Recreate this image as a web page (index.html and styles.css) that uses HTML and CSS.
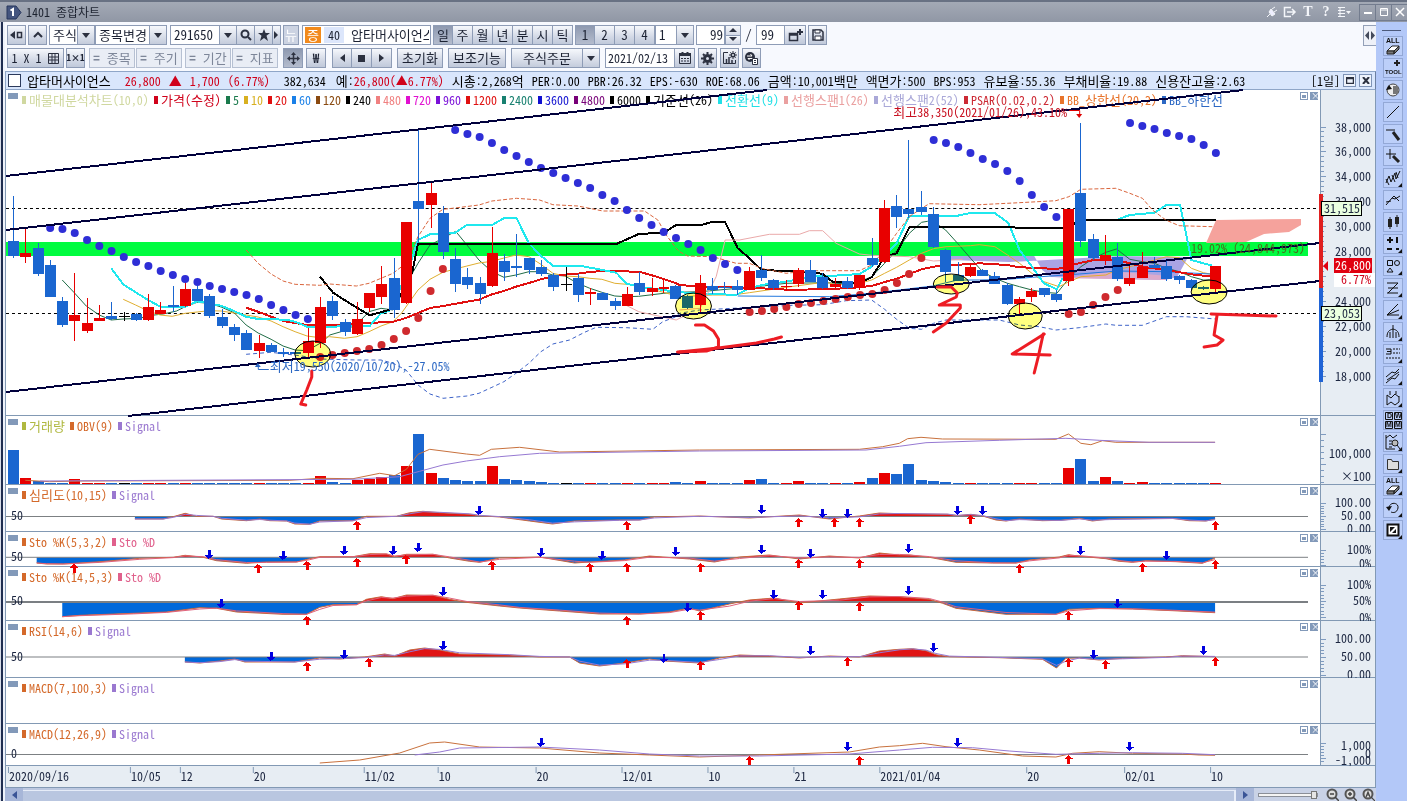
FILE: index.html
```html
<!DOCTYPE html>
<html lang="ko">
<head>
<meta charset="utf-8">
<title>1401 종합차트</title>
<link rel="stylesheet" href="styles.css">
</head>
<body>
<header class="titlebar">
  <svg class="badge" width="16" height="15" viewBox="0 0 16 15"><path d="M1 1h9l5 6.500-5 6.500H1z" fill="#44557f" stroke="#27365c"/><path d="M4.500 5.500L7 4v7" fill="none" stroke="#fff" stroke-width="2"/></svg>
  <h1>1401 종합차트</h1>
  <div class="title-tools">
    <button aria-label="연결"><svg width="12" height="12" viewBox="0 0 12 12"><path d="M1 11l3-3M3 6l3 4 3-2-4-5zM6 3l3-2M8 6l3-2" fill="#eef" stroke="#f4f6fa"/></svg></button>
    <button aria-label="내보내기"><svg width="14" height="12" viewBox="0 0 14 12"><path d="M8 1.500H1.500v9H8M4 6h8M9 3l3 3-3 3" fill="none" stroke="#f4f6fa" stroke-width="1.500"/></svg></button>
    <button class="serif" aria-label="글꼴">T</button>
    <button class="serif" aria-label="도움말">?</button>
    <button aria-label="메뉴"><svg width="14" height="12" viewBox="0 0 14 12"><path d="M1 1.500h7M1 4.500h7M1 7.500h7M1 10.500h7M3 1v10" stroke="#f4f6fa"/><path d="M9 5h5l-2.500 3z" fill="#f4f6fa"/></svg></button>
  </div>
  <div class="window-buttons">
    <button aria-label="최소화"><svg width="10" height="10"><path d="M1 6h8" stroke="#fff" stroke-width="2"/></svg></button>
    <button aria-label="최대화"><svg width="10" height="10"><path d="M1.500 1.500h7v7h-7zM1 3h8" fill="none" stroke="#fff"/></svg></button>
    <button aria-label="닫기"><svg width="10" height="10"><path d="M1 1l8 8M9 1L1 9" stroke="#fff" stroke-width="1.500"/></svg></button>
  </div>
</header>
<div class="workspace">
  <div class="frame"></div>
  <main class="content">
    <div class="toolbars">
      <button class="collapse" aria-label="접기"><svg width="12" height="9"><path d="M5 0v9L1 4.500zM7 0v9l4-4.500z" fill="#444b5c"/></svg></button>
      <div class="toolbar">
        <button class="btn sq" aria-label="이전"><svg width="13" height="10"><path d="M5 1v8L0 5z" fill="#2c3140"/><path d="M7.500 2.500h4v5h-4z" fill="none" stroke="#2c3140" stroke-width="1.500"/></svg></button>
        <button class="btn sq" aria-label="위로"><svg width="10" height="8"><path d="M1 6l4-4 4 4" fill="none" stroke="#2c3140" stroke-width="2"/></svg></button>
        <span class="pair">
          <span class="drop w46"><select aria-label="상품"><option>주식</option></select><i></i></span>
          <span class="drop w72"><select aria-label="종목변경"><option>종목변경</option></select><i></i></span>
        </span>
        <span class="joined">
          <span class="drop w67"><select aria-label="종목코드"><option>291650</option></select><i></i></span>
          <button class="btn w18" aria-label="검색"><svg width="12" height="12"><circle cx="5" cy="5" r="3.500" fill="none" stroke="#2c3140" stroke-width="2"/><path d="M8 8l3 3" stroke="#2c3140" stroke-width="2"/></svg></button>
          <button class="btn w18" aria-label="관심"><svg width="12" height="12"><path d="M6 0l1.600 4H12L8.500 6.800 10 12 6 9l-4 3 1.500-5.200L0 4h4.400z" fill="#2c3140"/></svg></button>
          <button class="btn w8" aria-label="더보기"><svg width="5" height="8"><path d="M0 0l4 4-4 4z" fill="#2c3140"/></svg></button>
        </span>
        <button class="btn news">뉴</button>
        <span class="stock"><b>증</b><em>40</em><span>압타머사이언스</span></span>
        <span class="joined">
          <button class="btn on">일</button><button class="btn">주</button><button class="btn">월</button><button class="btn">년</button><button class="btn">분</button><button class="btn">시</button><button class="btn">틱</button>
        </span>
        <span class="joined">
          <button class="btn on">1</button><button class="btn">2</button><button class="btn">3</button><button class="btn">4</button><span class="drop w39"><select aria-label="주기"><option>1</option></select><i></i></span>
        </span>
        <span class="joined">
          <input class="num right" aria-label="조회 개수" value="99">
          <span class="spin"><button aria-label="증가"><svg width="8" height="5"><path d="M0 4l4-4 4 4z" fill="#2c3140"/></svg></button><button aria-label="감소"><svg width="8" height="5"><path d="M0 0l4 4 4-4z" fill="#2c3140"/></svg></button></span>
        </span>
        <span class="slash">/</span>
        <span class="joined">
          <input class="num" aria-label="전체 개수" value="99">
          <button class="btn w21" aria-label="창 추가"><svg width="15" height="14"><path d="M1.500 5.500h8v7h-8zM1 7h9" fill="none" stroke="#2c3140" stroke-width="1.500"/><path d="M12 1v6M9 4h6" stroke="#2c3140" stroke-width="2"/></svg></button>
        </span>
        <button class="btn sq" aria-label="저장"><svg width="12" height="12"><path d="M1 1h8l2 2v8H1z" fill="none" stroke="#2c3140" stroke-width="1.500"/><path d="M3 1h5v3H3zM3 7h6v4H3z" fill="#fff" stroke="#2c3140"/></svg></button>
      </div>
      <div class="toolbar second">
        <button class="btn grid-btn">1 X 1 <svg width="12" height="11"><path d="M.5.5h10v10H.500zM.5 4h10M.5 7h10M4 .5v10M7 .5v10" fill="none" stroke="#2c3140"/></svg></button>
        <button class="btn sq tiny">1×1</button>
        <span class="sync"><button class="btn off"><b>=</b> 종목</button><button class="btn off"><b>=</b> 주기</button></span>
        <span class="sync"><button class="btn off"><b>=</b> 기간</button><button class="btn off"><b>=</b> 지표</button></span>
        <button class="btn on cross" aria-label="이동"><svg width="13" height="13"><path d="M6.500 2v9M2 6.500h9" stroke="#2c3140" stroke-width="1.500"/><path d="M4 3l2.500-3L9 3zM4 10l2.500 3L9 10zM3 4L0 6.500 3 9zM10 4l3 2.500L10 9z" fill="#2c3140"/></svg></button>
        <button class="btn bold">₩</button>
        <span class="joined player">
          <button class="btn" aria-label="뒤로"><svg width="5" height="8"><path d="M5 0L0 4l5 4z" fill="#2c3140"/></svg></button><button class="btn" aria-label="정지"><svg width="7" height="7"><path d="M0 0h7v7H0z" fill="#2c3140"/></svg></button><button class="btn" aria-label="앞으로"><svg width="5" height="8"><path d="M0 0l5 4-5 4z" fill="#2c3140"/></svg></button>
        </span>
        <button class="btn w46 reset">초기화</button>
        <button class="btn w58">보조기능</button>
        <span class="drop order"><select aria-label="주문"><option>주식주문</option></select><i></i></span>
        <span class="joined"><input class="date" aria-label="날짜" value="2021/02/13"><button class="btn" aria-label="달력"><svg width="12" height="12"><path d="M.5 1.500h11v10H.500z" fill="none" stroke="#2c3140"/><path d="M0 1h12v3H0zM2 6h2v1H2zM5 6h2v1H5zM8 6h2v1H8zM2 8.500h2v1H2zM5 8.500h2v1H5zM8 8.500h2v1H8zM2.500 0h2v2h-2zM7.500 0h2v2h-2z" fill="#2c3140"/></svg></button></span>
        <button class="btn sq" aria-label="설정"><svg width="13" height="13"><circle cx="6.500" cy="6.500" r="3" fill="none" stroke="#2c3140" stroke-width="3"/><path d="M6.500 0v2M6.500 11v2M0 6.500h2M11 6.500h2M2 2l1.500 1.500M9.500 9.500L11 11M11 2L9.500 3.500M3.500 9.500L2 11" stroke="#2c3140" stroke-width="2"/></svg></button>
        <button class="btn sq" aria-label="차트 설정"><svg width="15" height="14"><path d="M6 1.500H1.500v11h12V9" fill="none" stroke="#2c3140"/><path d="M4.500 12V8M7 12V6M10 12V9" stroke="#2c3140" stroke-width="1.500"/><circle cx="11" cy="4" r="1.800" fill="none" stroke="#2c3140" stroke-width="1.600"/><path d="M11 0v1.500M11 6.500V8M7 4h1.500M13.500 4H15M8.300 1.300l1 1M13.700 1.300l-1 1M8.300 6.700l1-1M13.700 6.700l-1-1" stroke="#2c3140"/></svg></button>
        <button class="btn sq" aria-label="변환"><svg width="15" height="14"><circle cx="6" cy="6" r="5" fill="#2c3140"/><path d="M3 5h5L6.500 3M9 7.500H4L5.500 9" fill="none" stroke="#fff"/><path d="M8.500 7.500h5v6h-5zM10 9.500h2M10 11.500h2" fill="#fff" stroke="#2c3140"/></svg></button>
      </div>
    </div>
    <div class="quote">
      <input type="checkbox" aria-label="종목 선택">
      <span class="ko">압타머사이언스</span>
      <span class="up price">26,800</span><span class="up ko">▲</span><span class="up">1,700</span><span class="up">(6.77%)</span>
      <span class="vol">382,634</span>
      <span><span class="ko">예</span>:<span class="up">26,800(▲6.77%)</span></span>
      <span><span class="ko">시총</span>:2,268<span class="ko">억</span></span><span>PER:0.00</span><span>PBR:26.32</span><span>EPS:-630</span><span>ROE:68.06</span><span><span class="ko">금액</span>:10,001<span class="ko">백만</span></span><span><span class="ko">액면가</span>:500</span><span>BPS:953</span><span><span class="ko">유보율</span>:55.36</span><span><span class="ko">부채비율</span>:19.88</span><span><span class="ko">신용잔고율</span>:2.63</span>
      <span class="quote-end">[1일]<button aria-label="창 크기"><svg width="8" height="7"><path d="M.5.5h7v6h-7zM0 1.500h8" fill="none" stroke="#2c3140" stroke-width="1.500"/></svg></button><button aria-label="차트 닫기"><svg width="8" height="7"><path d="M1 0l6 7M7 0L1 7" stroke="#2c3140" stroke-width="2"/></svg></button></span>
    </div>
    <div class="chart" id="chart"></div>
    <footer class="scroller">
      <button class="arrow" aria-label="왼쪽"><svg width="5" height="8"><path d="M5 0L0 4l5 4z" fill="#3b5596"/></svg></button>
      <div class="track"></div>
      <button class="arrow" aria-label="오른쪽"><svg width="5" height="8"><path d="M0 0l5 4-5 4z" fill="#3b5596"/></svg></button>
      <div class="zoombar">
        <input type="range" aria-label="확대" value="100">
        <button aria-label="축소"><svg width="13" height="13"><circle cx="6" cy="6" r="4.500" fill="#ddd" stroke="#555" stroke-width="2"/><path d="M4 6h4M9 9l4 4" stroke="#444" stroke-width="1.500"/></svg></button>
        <button aria-label="확대하기"><svg width="13" height="13"><circle cx="6" cy="6" r="4.500" fill="#ddd" stroke="#555" stroke-width="2"/><path d="M4 6h4M6 4v4M9 9l4 4" stroke="#444" stroke-width="1.500"/></svg></button>
        <button aria-label="전체"><svg width="13" height="13"><circle cx="6" cy="6" r="4.500" fill="#ddd" stroke="#555" stroke-width="2"/><path d="M4 9l2-5 2 5M5 7h2M9 9l4 4" fill="none" stroke="#444" stroke-width="1.200"/></svg></button>
      </div>
    </footer>
  </main>
  <aside class="tools" id="tools"></aside>
</div>
<script src="chart.js"></script>
</body>
</html>
```

FILE: styles.css
```css
* { box-sizing: border-box; }
body {
  margin: 0;
  height: 100vh;
  display: flex;
  flex-direction: column;
  overflow: hidden;
  font: 12px/14px "Noto Sans Mono CJK KR", "Noto Sans CJK KR", sans-serif;
  color: #1c2233;
  background: #f7f9fe;
}
button, input, select { font: inherit; color: inherit; margin: 0; padding: 0; border: 0; background: none; border-radius: 0; }
svg { display: block; flex: none; }
.ko { font-size: 13px; }

.titlebar {
  flex: none;
  height: 22px;
  display: flex;
  align-items: center;
  padding-left: 6px;
  border-top: 2px solid #687183;
  background: linear-gradient(#a3a9b5, #9097a5);
}
.titlebar h1 { margin: 0 auto 0 4px; font-size: 12px; font-weight: 400; color: #1d2330; }
.title-tools { display: flex; gap: 4px; margin-right: 8px; }
.title-tools button { width: 14px; height: 14px; display: grid; place-items: center; color: #f4f6fa; }
.serif { font: bold 14px/14px "Liberation Serif", serif; }
.window-buttons { display: flex; }
.window-buttons button { width: 16px; height: 17px; display: grid; place-items: center; border: 1px solid #737c8e; border-right: 0; }

.workspace { flex: 1; min-height: 0; display: flex; }
.frame { flex: none; width: 5px; border-left: 1px solid #d8dde8; background: linear-gradient(90deg, #1f2d50 0 2px, #eef2fa 2px); }
.content { flex: 1; min-width: 0; display: flex; flex-direction: column; }

.toolbars { position: relative; flex: none; height: 49px; padding: 3px 0 0 2px; display: flex; flex-direction: column; gap: 3px; }
.collapse { position: absolute; right: 0; top: 3px; width: 13px; height: 21px; display: grid; place-items: center; border: 1px solid #93a0b8; border-right: 0; background: #eef1f8; }
.toolbar { display: flex; height: 20px; gap: 2px; font-size: 13px; }
.toolbar > * { flex: none; }
.btn { width: 20px; height: 20px; display: flex; align-items: center; justify-content: center; border: 1px solid #8e9cb6; background: linear-gradient(#f6f8fc, #d3d9e6 60%, #c0c9da); white-space: nowrap; }
.on { background: linear-gradient(#8e99b0, #b4bccd); }
.off { gap: 7px; color: #7d8699; background: #e9edf5; border-color: #b6c0d2; width: 46px; }
.sq { width: 19px; }
.w8 { width: 8px; } .w18 { width: 18px; } .w21 { width: 21px; } .w46 { width: 46px; } .w58 { width: 58px; }
.joined, .pair, .sync { display: flex; }
.joined > * + * { border-left-width: 0; }
.pair { margin-right: 1px; }
.drop { position: relative; display: flex; height: 20px; border: 1px solid #8e9cb6; background: #fff; }
.drop select { appearance: none; width: 100%; padding-left: 3px; }
.drop i { position: absolute; right: 0; top: 0; bottom: 0; width: 17px; border-left: 1px solid #8e9cb6; background: linear-gradient(#f6f8fc, #c4ccdc); pointer-events: none; }
.drop i::after { content: ""; position: absolute; left: 4px; top: 7px; border: 4px solid transparent; border-top: 5px solid #2c3140; border-bottom: 0; }
.w72 { width: 72px; } .w67 { width: 67px; } .w39 { width: 39px; }
.news { width: 16px; color: #fff; background: #ccd3e2; margin-right: 1px; }
.stock { width: 129px; display: flex; align-items: center; gap: 3px; padding-left: 2px; border: 1px solid #8e9cb6; background: #fff; overflow: hidden; white-space: nowrap; }
.stock b { width: 16px; line-height: 16px; text-align: center; background: #f28a1c; color: #fff; font-weight: 400; }
.stock em { width: 20px; line-height: 16px; text-align: center; font-style: normal; font-size: 12px; background: #dce6fb; }
.stock span { margin-left: 4px; width: 78px; overflow: hidden; }
.num { width: 29px; height: 20px; padding: 0 0 2px 4px; border: 1px solid #8e9cb6; background: #fff; }
.right { text-align: right; padding-right: 1px; }
.spin { display: flex; flex-direction: column; width: 16px; border: 1px solid #8e9cb6; }
.spin button { flex: 1; display: grid; place-items: center; background: linear-gradient(#f6f8fc, #d3d9e6); }
.spin button + button { border-top: 1px solid #8e9cb6; }
.slash { width: 11px; line-height: 20px; text-align: center; }
.second { gap: 3px; }
.grid-btn { width: 57px; gap: 6px; font-size: 12px; }
.tiny { font-size: 9px; font-weight: 700; }
.bold { font-weight: 700; }
.second > .tiny { margin: 0 1px 0 -1px; }
.sync { gap: 1px; }
.cross { margin-left: 2px; }
.player { margin: 0 2px 0 3px; }
.reset { margin-right: 2px; }
.order { width: 89px; margin: 0 2px; background: linear-gradient(#f6f8fc, #c4ccdc); }
.order select { padding-left: 11px; }
.date { width: 70px; height: 20px; padding: 0 0 2px 2px; border: 1px solid #8e9cb6; background: #fff; font-size: 12px; }

.quote { flex: none; height: 19px; display: flex; align-items: center; gap: 8px; padding: 0 3px 0 2px; border: 1px solid #8fa6c8; border-right-color: #6c7fa0; background: #d9e6fc; color: #000; white-space: nowrap; }
.quote input { appearance: none; flex: none; width: 13px; height: 13px; margin-right: -2px; border: 1px solid #2c3a5c; background: #fff; }
.up { color: #d0021b; }
.price { margin-left: 6px; }
.vol { margin: 0 2px 0 6px; }
.quote-end { margin-left: auto; display: flex; gap: 3px; align-items: center; }
.quote-end button { width: 13px; height: 13px; display: grid; place-items: center; border: 1px solid #7e93b6; background: #eef3fc; }

.chart { flex: 1; min-height: 0; display: flex; flex-direction: column; background: #fff; border-left: 1px solid #8299b4; border-right: 1px solid #8299b4; }
.pane { flex-basis: 0; min-height: 0; display: grid; grid-template-columns: minmax(0, 1fr) 55px; grid-template-rows: minmax(0, 1fr); border-bottom: 1px solid #8299b4; }
.plot, .axis { position: relative; min-width: 0; }
.axis { border-left: 1px solid #8299b4; background: #e7edf3; }
.plot svg, .axis svg { position: absolute; inset: 0; width: 100%; height: 100%; overflow: visible; pointer-events: none; }
.dates .plot { background: #e7edf3; }
.dates .axis { border-left: 0; }
.legend { position: absolute; left: 2px; right: 2px; top: 3px; display: flex; align-items: flex-start; white-space: nowrap; }
.legend::before { content: ""; width: 10px; height: 6px; margin-right: 4px; background: #8299b9; }
.key { flex: none; display: flex; align-items: center; gap: 3px; }
.key::before { content: ""; width: 4px; height: 8px; background: currentColor; }
.pane-buttons { position: absolute; right: 2px; top: 2px; display: flex; gap: 2px; }
.pane-buttons button { width: 8px; height: 8px; border: 1px solid #8299b9; background: linear-gradient(#8299b9, #8299b9) center / 4px 3px no-repeat #fff; }
.pane-buttons button + button { background: #8299b9; color: #fff; font-size: 9px; line-height: 6px; }
text { font: 12px "Noto Sans Mono CJK KR", "Noto Sans CJK KR", sans-serif; fill: #1c2640; }
.crisp { shape-rendering: crispEdges; }
.highlight { fill: #ffff80; stroke: #000; mix-blend-mode: multiply; }

.scroller { flex: none; height: 13px; display: flex; background: #bcc8e0; }
.arrow { width: 18px; display: grid; place-items: center; background: #a7b6d8; }
.track { flex: 1; margin: 2px 0 0; background: #b9c6e0; border-top: 1px solid #e6ecf8; border-right: 2px solid #e6ecf8; }
.zoombar { width: 122px; display: flex; align-items: center; gap: 5px; padding-left: 4px; background: #c9d2e6; }
.zoombar input { width: 60px; height: 4px; margin-right: 3px; appearance: none; border: 1px solid #8b8f98; background: #f4f4f4; }
.zoombar input::-webkit-slider-thumb { appearance: none; width: 6px; height: 8px; background: #e5e5e5; border: 1px solid #777; }

.tools { flex: none; width: 31px; display: flex; flex-direction: column; align-items: center; gap: 2px; padding: 8px 0 0; background: #b3c8f8; }
.tools hr { width: 19px; margin: 0 0 3px; border: 0; border-top: 1px solid #4c5a7c; }
.tools button { width: 20px; height: 20px; margin-left: 2px; border: 1px solid #93a8d6; background: #bccff9; }
.tools text { font: 700 7px "Liberation Sans", sans-serif; fill: #111; }
.tools .small { font-size: 6px; }
```

FILE: chart.js
```js
const $ = id => document.getElementById(id);
const X = i => 13.4 + 12.28 * i;
const RED = '#e80000', BLUE = '#1a66d0', NAVY = '#00003c';

/* points digitised in thirds of a unit from a local origin */
const tr = (ox, oy, s) => s.trim().split(/\s+/).map(p => {
  const [x, y] = p.split(',').map(Number);
  return [ox + x / 3, oy + y / 3];
});
const px = s => s.trim().split(/\s+/).map(p => p.split(',').map(Number));
const str = pts => pts.map(p => p[0].toFixed(1) + ',' + p[1].toFixed(1)).join(' ');
const line = (pts, color, w = 1, extra = '') =>
  `<polyline class="crisp" points="${str(pts)}" fill="none" stroke="${color}" stroke-width="${w}" ${extra}/>`;
const ko = (t, tag = 'span') => t.replace(/[\uac00-\ud7a3]+/g, m => `<${tag} class="ko">${m}</${tag}>`);

/* high, body top, body bottom, low, colour */
const candles = `196,241,256,258,b 229,253,257,263,r 243,248,274,276,b 260,265,297,297,b 297,301,325,327,b
273,315,321,341,r 298,323,331,333,r 305,318,321,321,r 302,316,319,320,b 312,316,317,321,k
313,314,320,321,b 294,307,320,321,r 302,310,314,314,r 286,305,307,312,b 282,289,306,307,r
286,289,301,301,b 294,296,316,318,b 309,317,326,328,b 324,327,335,341,b 330,333,350,350,b
335,343,351,358,r 343,345,352,352,b 348,352,354,357,b 351,352,354,354,b 328,341,353,357,r
297,307,343,348,r 296,301,316,320,b 319,322,332,336,b 302,319,334,335,r 293,293,308,312,r
266,284,297,304,r 258,278,310,318,b 222,222,303,304,r 129,201,209,243,b 183,193,205,228,r
206,213,252,259,b 248,259,284,292,b 268,277,285,289,b 277,283,294,304,b 227,253,286,287,r
254,261,272,281,b 234,266,268,277,b 258,258,270,274,b 260,267,274,276,b 273,275,287,291,b
267,284,285,291,k 274,278,295,302,b 288,292,294,305,r 292,293,300,300,b 298,301,306,310,b
287,294,306,306,r 272,283,292,295,b 278,288,292,296,r 279,287,289,293,r 285,286,299,299,b
295,296,308,309,b 275,283,305,312,r 278,286,290,294,b 282,287,288,293,b 280,286,290,295,b
267,271,290,290,r 255,270,278,281,b 279,280,288,290,b 280,286,287,291,r 268,270,284,287,r
260,270,282,282,b 273,277,288,289,b 278,284,287,288,r 277,281,288,289,b 275,275,288,290,r
238,258,265,267,b 200,208,262,263,r 195,206,217,228,b 140,209,214,218,b 191,207,212,215,b
207,214,247,248,b 249,250,272,282,b 262,275,281,281,b 263,267,276,277,r 269,270,276,276,b
272,276,284,284,b 283,285,304,305,b 297,299,304,315,r 288,291,297,302,r 288,288,295,297,b
290,294,300,302,b 209,209,281,286,r 123,193,241,247,b 234,239,258,260,b 235,255,261,265,r
243,257,279,281,b 263,278,284,286,r 252,267,278,278,r 257,265,268,268,b 259,266,279,281,b
275,276,280,284,b 279,280,288,290,b 286,287,289,290,b 266,266,289,294,r`.split(/\s+/).map(r => r.split(','));
const tone = { b: BLUE, r: RED, k: '#000' };

/* first index, colour, levels */
const psar = [
  [3, 'b', '228 229 233 240 246 251 257 262 266 271 275 279 282 286 289 292 295 299 305 310 315 319'],
  [25, 'r', '357 355 353 351 349 345 339 331 318 291 269'],
  [36, 'b', '130 134 137 143 150 156 162 168 173 178 183 188 195 201 210 218 225 232 238 244 250 258 264 270'],
  [60, 'r', '312 311 309 307 304 303 301 299 297 295 294 290 283 274 258'],
  [75, 'b', '140 143 147 153 159 164 171 181 195 207 217'],
  [86, 'r', '314 312 305 297 290'],
  [91, 'b', '123 126 129 133 136 139 145 153']
];

const A = [0, 180], B = [330, 120], C = [680, 180], D = [980, 90];
const join = (...parts) => parts.flatMap(([o, s]) => tr(o[0], o[1], s));

function pricePlot() {
  let s = '';
  s += `<path class="crisp" d="M6 242H1309V256H6z" fill="#00fc40"/>`;
  s += `<polygon points="${str(px('946,256 1035,256 1043,270 1052,277 1166,280 1178,277 1189,257 1120,256 1010,262 950,260'))}" fill="#aaa4e4"/>`;
  s += `<polygon points="${str(px('1075,277 1110,271 1170,276 1166,280 1055,278'))}" fill="#dcaacb"/>`;
  s += `<polygon points="${str(px('1217,220 1302,219 1302,225 1290,232 1265,234 1247,242 1207,243'))}" fill="#f5a29c"/>`;
  s += `<path class="crisp" d="M6 208.500H1321M6 313.500H1321" stroke="#000" stroke-dasharray="3 3"/>`;
  // moving averages
  s += line(join([A, '187,300 223,338 259,378 298,405 334,420 370,417 420,415 445,407 490,402 530,393 556,380 592,367 628,370 664,381 703,398 739,435 775,459 814,478 850,498 886,510 922,512 961,490 985,470'],
    [B, '0,645 44,632 82,612 118,575 154,565 190,570 229,500 247,462 265,430 301,375 330,360 378,334 412,375 448,420 487,455 523,472 559,465 598,455 634,455 670,465 706,468 745,490 781,505 817,517 856,528 892,530 928,529 1003,520 1040,517'],
    [C, '62,335 250,318 320,310 440,308 505,312 541,305 577,290 616,250 652,212 690,160 727,127 745,124 763,125 799,150 835,190 874,235 910,275'],
    [D, '47,565 85,580 121,590 158,600 194,607 233,610 269,565 305,530 344,505 380,487 412,477 452,508 490,515 526,520 562,535 601,545 637,560 673,570 710,570']), '#1f6b45');
  s += line(join([A, '370,358 407,375 445,393 481,405 517,409 556,400 592,396 628,392 664,393 703,399 739,405 775,411 814,423 850,440 886,455 922,468 961,473'],
    [B, '0,650 44,655 82,650 118,635 154,618 190,605 215,580 265,510 301,478 340,457 376,447 412,438 448,429 487,424 523,414 559,405 598,410 634,433 670,460 706,468 745,470 781,475 817,478 856,490 892,493 928,497'],
    [C, '0,350 100,345 160,345 210,338 320,322 440,306 470,315 541,310 577,300 616,280 652,262 690,240 727,220 763,206 800,200 874,197'],
    [D, '0,464 47,470 85,495 121,520 158,550 194,575 240,590 269,575 305,560 380,555 412,540 452,530 490,520 562,500 601,503 637,535 673,548 710,555']), '#dfae2f');
  s += line(join([C, '175,348 450,350 541,343 616,335 760,318 835,300'], [D, '0,570 85,568 160,562 300,552 415,543 562,545 710,553']), '#2277dd');
  s += line(join([A, '739,383 775,395 814,410 850,423 886,429 922,435 961,435'],
    [B, '0,615 82,612 118,609 190,605 229,594 265,579 301,564 340,558 412,545 448,539 487,523 523,513 559,500 598,489 634,478 670,469 706,464 745,461 781,456 817,453 928,455 964,465 1003,477 1039,489'],
    [C, '0,315 62,320 100,321 247,325 340,330 430,327 505,325 577,318 616,306 652,296 690,282 727,268 763,260 800,256 880,252'],
    [D, '0,520 85,525 121,532 158,533 233,537 269,528 305,518 344,510 380,507 412,510 452,520 490,530 562,540 637,553 673,557 710,560']), '#e01010', 2);
  s += line(join([A, '334,265 370,313 407,337 445,360 481,380 517,382 556,380 592,364 628,370 664,377 703,393 739,410 775,417 860,419 886,425 922,440 961,440'],
    [B, '0,620 82,618 120,618 154,580 178,572 229,470 265,360 301,343 376,339 412,315 487,315 523,295 560,293 598,370 634,407 670,437 760,439 820,450 860,458 892,491 928,500 1003,510'],
    [C, '0,337 170,345 210,325 247,315 320,305 394,290 450,288 541,282 577,260 616,225 652,190 690,107 835,107 872,99'],
    [D, '0,368 47,370 87,398 121,480 158,530 194,580 233,598 250,565']), '#1fe8ee', 2);
  s += line(tr(...D, '418,387 452,375 526,368 562,345 603,345 637,510 673,520 700,527'), '#1fe8ee', 2);
  s += line(join([A, '961,290 1000,338'],
    [B, '60,550 120,586 178,570 210,530 229,495 247,460 265,372 860,372 928,342 1003,338 1040,315'],
    [C, '0,135 65,135 97,126 137,126 175,205 205,230 247,270 394,276 430,282 460,305 540,310 577,292 616,230 652,220 690,142'],
    [D, '0,411 105,411 110,414 255,414 288,400 322,390 710,390']), '#000', 2);
  s += line(join([C, '0,390 62,385 110,290 137,180 180,180 270,163 360,163 390,152 430,152 470,190 540,222 577,226 690,230 763,243 850,238']), '#eaa9a9');
  s += line(tr(...B, '892,557 928,575 1040,600 1080,580'), '#eaa9a9');
  s += line(join([A, '739,210 775,250 814,282 850,303 886,313 960,316'],
    [B, '0,492 80,498 118,490 154,475 190,460 229,430 265,350 301,295 340,268 376,264 448,255 487,243 560,235 630,240 670,254 745,258 820,273 945,273 985,300 1010,345 1040,385'],
    [C, '0,215 25,228 100,230 170,250 210,250 247,265 320,280 394,272 540,272 577,255 616,210 652,160 690,110 727,85 750,71'],
    [D, '0,344 120,338 230,332 269,320 305,298 410,295 452,310 490,325 520,360 560,390 600,407 700,410']), '#d9643c', 1, 'stroke-dasharray="4 2"');
  s += line(join([A, '739,523 814,517 900,527 960,537 1069,540'],
    [B, '100,720 154,720 190,730 229,750 265,795 301,822 340,835 412,828 448,820 487,802 523,785 559,760 598,730 634,695 670,672 720,660 765,637 800,622 892,623 970,628 1000,605 1040,590'],
    [C, '0,400 60,390 340,376 430,374 500,362 577,360 616,388 652,418 690,445 727,448 763,430 800,420'],
    [D, '60,690 121,705 180,710 230,720 300,713 380,702 410,706 490,706 562,680 620,680 710,687']), '#3d62c8', 1, 'stroke-dasharray="4 3"');
  candles.forEach(([h, t, b, l, c], i) => {
    const x = Math.round(X(i) - 0.4);
    s += `<path class="crisp" d="M${x} ${h}h1V${l}h-1zM${x - 5} ${t}h11V${b}h-11z" fill="${tone[c]}"/>`;
  });
  psar.forEach(([start, c, v]) => v.split(' ').forEach((y, k) => {
    s += `<circle cx="${X(start + k).toFixed(1)}" cy="${y}" r="4" fill="${c === 'b' ? '#2e2ed6' : '#cf2a2e'}"/>`;
  }));
  // user drawings
  [[313, 354, 18, 13], [694, 306, 18, 13], [952, 284, 18, 10], [1026, 316, 17, 13], [1210, 292, 18, 12]].forEach(([x, y, a, b]) => {
    s += `<ellipse class="highlight" cx="${x}" cy="${y}" rx="${a}" ry="${b}"/>`;
  });
  ['6,176 768,90', '6,230 1244,90', '6,392 1321,243', '128,416 1321,281'].forEach(p => s += line(px(p), NAVY, 2));
  ['312,371 312,377 307,390 301,404 306,405', '696,325 705,325 714,331 719,339 719,347 707,351 678,352', '680,352 719,348 757,343 775,339 782,337',
    '938,287 952,287 958,293 957,297 940,305 961,305 961,308 947,323 934,332', '1045,334 1013,354 1051,355', '1044,334 1039,357 1035,373',
    '1212,314 1277,316', '1218,315 1215,335 1224,340 1218,345 1205,347'].forEach(p =>
    s += `<polyline points="${p}" fill="none" stroke="#ed1c24" stroke-width="3" stroke-linejoin="round" stroke-linecap="round"/>`);
  s += `<text x="894" y="117" style="fill:#c81020">${ko('최고38,350(2021/01/26),43.10%', 'tspan')}</text><path d="M1070 110.500h10.500v4" fill="none" stroke="#d00"/><path d="M1077 114h6l-3 4z" fill="#d00"/>`;
  s += `<text x="270" y="371" style="fill:#2c68c4">${ko('최저19,550(2020/10/20),-27.05%', 'tspan')}</text><path d="M269 369.500h-10.500v-4" fill="none" stroke="#2c68c4"/><path d="M255 367l3-4 3 4z" fill="#2c68c4"/>`;
  s += `<text x="1192" y="253" style="fill:#4a6a1c">19.02% (24,844,973)</text>`;
  return s;
}

function volumePlot() {
  const top = { 0: 450, 1: 478, 2: 481, 5: 479, 25: 476, 26: 482, 28: 480, 29: 479, 30: 477, 31: 475, 32: 466, 33: 434, 34: 473, 35: 478, 36: 480, 37: 481, 38: 481, 39: 466, 40: 479, 41: 480, 42: 481, 43: 482, 54: 482, 56: 481, 60: 480, 61: 479, 64: 481, 69: 482, 70: 478, 71: 473, 72: 474, 73: 464, 74: 480, 75: 481, 76: 482, 86: 468, 87: 459, 88: 481, 89: 477, 90: 481, 92: 482 };
  let s = '';
  candles.forEach((c, i) => {
    s += `<path class="crisp" d="M${Math.round(X(i) - 0.4) - 5} ${top[i] || 483}h11V484h-11z" fill="${tone[c[4]]}"/>`;
  });
  const o = [0, 400], r = [900, 400];
  s += line(join([o, '76,241 149,245 240,243 870,241 960,235 1060,236 1140,220 1185,227 1220,208 1255,163 1290,148 1400,162 1440,166 1475,148 1560,142 1680,156 2100,150 2580,148 2650,140'],
    [r, '0,130 25,116 65,112 130,117 470,118 508,102 545,130 575,134 610,122 650,127 948,127']), '#c8703c');
  s += line(join([o, '120,243 1060,238 1200,230 1260,214 1330,195 1400,183 1500,170 1620,160 2100,153 2600,150'],
    [r, '0,139 80,128 300,121 500,115 600,121 750,127 948,127']), '#9678d2');
  return s;
}

function oscillator(id, base, pts, sig, w = 1) {
  const xs = pts[0][0], xe = pts[pts.length - 1][0];
  const poly = str([[xs, base], ...pts, [xe, base]]);
  let s = `<clipPath id="${id}u"><path d="M0 ${base - 60}H1400V${base}H0z"/></clipPath><clipPath id="${id}d"><path d="M0 ${base}H1400V${base + 60}H0z"/></clipPath>`;
  s += `<polygon points="${poly}" fill="#e01414" clip-path="url(#${id}u)"/><polygon points="${poly}" fill="#0068da" clip-path="url(#${id}d)"/>`;
  s += line([[6, base], [1309, base]], '#7b7f83', w) + line(pts, '#c9653a');
  // trailing average
  const avg = pts.map((p, i) => {
    const q = pts[Math.max(0, i - 1)];
    return [p[0], p[1] * 0.7 + q[1] * 0.3];
  });
  return s + line(avg, sig);
}
function marks(down, up) {
  const arrow = (list, color, k) => px(list).map(([x, y]) =>
    `<path class="crisp" d="M${x} ${y + 4 * k}l-4 ${-4 * k}h3v${-5 * k}h3v${5 * k}h3z" fill="${color}"/>`).join('');
  return arrow(down, '#0000e0', 1) + arrow(up, '#f00000', -1);
}
const o8 = [0, 400], o10 = [900, 400];
const psy = () => oscillator('psy', 516.5, [...tr(...o8, '405,357 490,357 520,350 556,340 590,349 640,349 665,357 740,362 780,357 810,362 860,363 885,372 930,373 960,363 1060,362 1100,349 1190,349 1230,338 1270,334 1320,338 1410,343 1440,347'),
  ...px('500,517 530,521 553,524 575,521 620,520 640,520 655,517 700,516 750,518 800,515 830,519 860,516 880,513'),
  ...tr(...o10, '0,341 145,343 175,347 215,343 250,348 290,360 320,363 360,357 430,362 485,361 540,355 580,363 630,357 820,355 870,362 920,363 948,357')], '#9678d2')
  + marks('479,511 762,510 823,514 848,514 958,511 983,511', '357,525 627,525 799,522 835,522 860,522 971,519 1216,525');
const sto5 = () => oscillator('st5', 557.3, [...tr(...o8, '110,489 140,492 190,492 300,485 420,475 520,472 556,466 610,472 650,482 740,490 800,486 890,486 930,476 960,470 1060,470 1110,461 1160,462 1185,470 1220,463 1300,463 1350,474 1410,484 1440,487'),
  ...px('500,558 540,557 575,563 590,562 625,560 650,556 690,559 715,562 740,557 770,555 800,559 830,556 860,558 880,553'),
  ...tr(...o10, '0,465 30,465 90,472 170,487 280,489 350,489 390,480 480,471 508,464 545,469 620,476 660,484 700,487 740,482 830,485 910,490 948,474')], '#e0607a')
  + marks('209,555 283,556 344,551 393,551 418,548 541,553 602,556 676,552 762,550 811,554 909,549 1081,551 1167,556', '74,568 258,568 307,565 357,562 406,559 492,565 590,567 627,567 701,567 799,563 860,563 1020,568 1143,567 1216,564');
const sto14 = () => oscillator('s14', 602, [...tr(...o8, '187,650 240,646 400,640 500,636 600,623 650,625 710,636 850,643 920,643 960,622 1000,614 1070,614 1100,598 1145,590 1180,596 1220,585 1300,586 1350,598 1400,607'),
  ...px('500,606 520,608 560,611 600,614 640,614 670,612 690,608 700,611 730,604 750,600 775,598 800,603 840,599 870,596'),
  ...tr(...o10, '0,590 90,598 130,610 170,625 320,643 470,643 510,628 600,625 700,627 820,632 948,638')], '#e0607a', 2)
  + marks('221,604 443,592 688,608 774,595 823,595 909,591 1118,604', '307,620 627,620 701,615 799,605 860,606 1069,615');
const rsi = () => oscillator('rsi', 657, [...px('185,662 200,663 220,661 235,659 245,662 295,662 320,658 340,659 365,657 385,654 395,656 410,650 425,648 440,650 460,654 510,655 540,657 570,657 580,663 600,666 625,663 650,659 665,661 700,663 720,658 740,655 770,656 800,658 830,656 860,657 880,651'),
  ...tr(900, 600, '0,148 40,146 80,152 110,164 150,170 300,173 430,178 472,204 500,175 540,174 600,180 670,175 800,171 850,167 948,170')], '#9678d2')
  + marks('271,657 344,655 443,646 664,659 811,651 934,648 1094,655 1204,651', '307,666 369,662 627,663 701,665 848,661 1069,662 1106,664 1216,661');
const macd = () => line([[6, 754.5], [1309, 754.5]], '#7b7f83')
  + line([...px('320,763 360,760 400,753 430,743 445,742 480,747 540,748 600,753 650,755 700,757 760,755 850,752 880,747'), ...tr(900, 600, '0,437 70,430 140,440 240,450 370,468 470,471 520,460 600,455 700,460 850,462 900,465 948,466')], '#c8703c')
  + line([...px('415,755 440,752 460,748 540,747 600,750 650,754 700,756 760,756 850,754 900,750'), ...tr(900, 600, '100,442 220,443 330,453 470,463 600,460 700,458 850,460 948,464')], '#9678d2')
  + marks('541,743 848,747 958,743 1130,747', '750,760 860,760 1069,759');

const label = (t, y, x = 1372) => `<text x="${x}" y="${y + 5}" text-anchor="end">${t}</text>`;
const ticks = (a, b, step) => {
  let d = '', k = 0;
  for (let y = a; y <= b; y += step, k++) d += `M1322 ${Math.round(y) + .5}h${k % 5 ? 3 : 5}`;
  return `<path class="crisp" d="${d}" stroke="#7f9bc0"/>`;
};
function priceAxis() {
  let s = ticks(126.5, 376, 4.98);
  s += `<path class="crisp" d="M1320 194h4V288h-4z" fill="#e02020"/><path class="crisp" d="M1320 288h4V382h-4z" fill="#1f63d6"/>`;
  [38, 36, 34, 32, 30, 28, 24, 22, 20, 18].forEach(v => s += label(v + ',000', 126.5 + (38 - v) * 12.45));
  s += `<path class="crisp" d="M1335 258h38v15h-38z" fill="#e00010"/><path class="crisp" d="M1335 273h41v14h-41z" fill="#fff"/><path d="M1329 261v10l-5-5z" fill="#e00010"/>`;
  s += `<text x="1372" y="270" text-anchor="end" style="fill:#fff">26,800</text><text x="1372" y="284" text-anchor="end" style="fill:#d0021b">6.77%</text>`;
  [['31,515', 208], ['23,053', 313]].forEach(([t, y]) => s += `<path class="crisp" d="M1322.500 ${y - 6.5}h40v14h-40z" fill="#eaffdf" stroke="#000"/>` + label(t, y, 1361));
  return s;
}
const dates = [[8, '2020/09/16'], [130, '10/05'], [180, '12'], [253, '20'], [364, '11/02'], [438, '10'], [536, '20'], [622, '12/01'], [708, '10'], [794, '21'], [880, '2021/01/04'], [1027, '20'], [1125, '02/01'], [1211, '10']];

const O = '#d4692a', P = '#9a78d0';
const panes = [
  { y: 90, h: 325, plot: pricePlot, axis: priceAxis, keys: [['매물대분석차트(10,0)', '#d0d8a0'], ['가격(수정)', '#d0021b'], ['5', '#1a7a4c'], ['10', '#d8b020'], ['20', '#e01010'], ['60', '#1a80e8'], ['120', '#8a4a10'], ['240', '#000'], ['480', '#f08080'], ['720', '#e010d0'], ['960', '#7a10d8'], ['1200', '#e01010'], ['2400', '#188070'], ['3600', '#1010d0'], ['4800', '#780078'], ['6000', '#000'], ['기준선(26)', '#000'], ['전환선(9)', '#20dfe6'], ['선행스팬1(26)', '#eaa0a0'], ['선행스팬2(52)', '#aaa8d8'], ['PSAR(0.02,0.2)', '#cc2a34'], ['BB_상한선(20,2)', '#e8742c'], ['BB_하한선', '#2c68c4']] },
  { y: 416, h: 68, plot: volumePlot, axis: () => ticks(434, 483, 6) + label('100,000', 453) + label('×100', 476), keys: [['거래량', '#b0b840'], ['OBV(9)', O], ['Signal', P]] },
  { y: 485, h: 46, plot: psy, mid: ['50', 516], axis: () => ticks(503, 530, 2.6) + label('100.00', 502) + label('50.00', 515) + label('0.00', 528), keys: [['심리도(10,15)', O], ['Signal', P]] },
  { y: 532, h: 34, plot: sto5, mid: ['50', 557], axis: () => ticks(550, 565, 3) + label('100%', 549) + label('0%', 563), keys: [['Sto %K(5,3,2)', O], ['Sto %D', '#e0608c']] },
  { y: 567, h: 53, plot: sto14, mid: ['50', 601], axis: () => ticks(585, 619, 3.2) + label('100%', 584) + label('50%', 600) + label('0%', 617), keys: [['Sto %K(14,5,3)', O], ['Sto %D', '#e0608c']] },
  { y: 621, h: 56, plot: rsi, mid: ['50', 657], axis: () => ticks(639, 676, 3.6) + label('100.00', 638) + label('50.00', 656) + label('0.00', 674), keys: [['RSI(14,6)', O], ['Signal', P]] },
  { y: 678, h: 45, plot: () => '', axis: () => '', keys: [['MACD(7,100,3)', O], ['Signal', P]] },
  { y: 724, h: 41, plot: macd, mid: ['0', 754], axis: () => ticks(743, 763, 3) + label('1,000', 745) + label('0', 753) + label('-1,000', 760), keys: [['MACD(12,26,9)', O], ['Signal', P]] }
];
/* a Hangul syllable takes two cells */
const cells = t => [...t].reduce((n, c) => n + (c > '\u1100' ? 2 : 1), 0);
const canvas = (x, y, w, h, body) => `<svg viewBox="${x} ${y} ${w} ${h}" preserveAspectRatio="none">${body}</svg>`;

$('chart').innerHTML = panes.map(p => `<section class="pane" style="flex-grow:${p.h}">
  <div class="plot"><div class="legend">${p.keys.map(([t, c]) => `<span class="key" style="color:${c};width:${cells(t) * 6 + 12}px"><span>${ko(t)}</span></span>`).join('')}</div>
  ${canvas(6, p.y, 1315, p.h, p.plot() + (p.mid ? `<text x="11" y="${p.mid[1] + 4}">${p.mid[0]}</text>` : ''))}
  <div class="pane-buttons"><button aria-label="확대"></button><button aria-label="닫기">×</button></div></div>
  <div class="axis">${canvas(1322, p.y, 54, p.h, p.axis())}</div></section>`).join('')
  + `<section class="pane dates" style="flex-grow:21"><div class="plot">${canvas(6, 766, 1315, 21, dates.map(([x, t]) =>
    `<path class="crisp" d="M${x + .5} 767v6" stroke="#8299b4"/><text x="${x + 1}" y="781">${t}</text>`).join(''))}</div><div class="axis"></div></section>`;

/* drawing tools: name, icon body, has sub-menu */
const eraser = '<text x="2" y="6">ALL</text><path d="M3 14l5-5h7l-5 5z" fill="#fff" stroke="#222"/><path d="M3 14h7v3H3zM10 14l5-5v3l-5 5z" fill="#777" stroke="#222"/>';
const k = d => `<path d="${d}" fill="none" stroke="#111"/>`;
const f = (d, c = '#111') => `<path d="${d}" fill="${c}"/>`;
const tools = [
  ['전체 지우기', eraser, 0],
  ['도구 추가', '<path d="M10 4h6M13 1v6" stroke="#222" stroke-width="2"/><text class="small" x="1" y="15">TOOL</text>', 0],
  ['되돌리기', '<circle cx="9" cy="9" r="6" fill="#eee" stroke="#444"/>' + f('M9 5h5v8H9z', '#777') + f('M2 9l3-5 3 4z'), 0],
  ['직선', k('M3 15L15 3'), 0],
  ['수평 펜', k('M2 5h9') + '<path d="M9 7l6 8" stroke="#222" stroke-width="3"/>', 0],
  ['십자 펜', k('M2 7h10M6 2v10') + '<path d="M9 9l6 6" stroke="#222" stroke-width="3"/>', 0],
  ['파동', k('M2 14l3-7 2 6 4-9 1 6 4-8M2 10l3 6M8 6l3 7M12 3l2 6'), 1],
  ['꺾은선', k('M2 14l6-7 3 1 5-3') + '<path d="M2 11l5-1M8 7l2-2 5 5" fill="none" stroke="#111"/>', 0],
  ['봉', f('M4 6h4v8H4zM5.500 4h1v12h-1zM11 4h4v7h-4zM12.500 2h1v12h-1z', '#222'), 0],
  ['가감', '<path d="M3 5h6M6 2v6M13 2v6M3 14h5M12 14h3" stroke="#111" stroke-width="2"/>', 1],
  ['도형', k('M3.500 3.500h5v5h-5zM3 15l3-4 3 4z') + '<circle cx="13" cy="6" r="2.500" fill="none" stroke="#111"/>', 1],
  ['평행선', k('M3 4h11M4 9h10M3 14h11M14 4L4 14'), 1],
  ['부채꼴', k('M3 14L14 3M3 14l12-5M3 14h12'), 1],
  ['피치포크', k('M9 2v13M3 14c0-5 2-7 6-8 4 1 6 3 6 8M6 9v6M12 9v6'), 1],
  ['점선', '<path d="M2 4h5v5H2M3 6.500h4" fill="none" stroke="#111"/><path d="M9 4h7M9 8h7M2 13h14" stroke="#111" stroke-dasharray="2 1"/>', 1],
  ['채널', k('M2 10l6-5 3 1 4-4M2 16l6-5 3 1 4-5M3 13l12-8'), 1],
  ['구간', k('M3 6v10l4-3 4 3 4-3V7M3 6l4 3 4-4 4 3M6 2v4M12 2v3'), 1],
  ['기간 변경', k('M1.500 1.500h7v7h-7zM10.500 1.500h7v7h-7zM1.500 10.500h7v7h-7zM10.500 10.500h7v7h-7z') + '<text x="3" y="7">D</text><text x="11" y="7">W</text><text x="2" y="16">M</text><text x="11" y="16">M</text>', 0],
  ['차트 검색', k('M2 2v14h9M2 5l4-3 3 3 4-3M5 8h3M5 11h3M5 14h3') + '<circle cx="11" cy="10" r="3" fill="#bbb" stroke="#222"/>' + k('M13 12l3 4'), 1],
  ['폴더', '<path d="M3.500 14.500v-10h4l1 2h6v8z" fill="#ddd" stroke="#333"/>', 1],
  ['전체 삭제', eraser, 1],
  ['실행 취소', k('M5 8c2-6 10-4 9 1s-5 5-7 4') + f('M2 8l6-1-3 5z'), 1],
  ['전체 화면', '<path d="M3.500 3.500h11v11h-11z" fill="#fff" stroke="#111" stroke-width="2"/>' + f('M6 6h5l-5 5zM12 12H8l4-4z'), 1]
];
$('tools').innerHTML = '<hr>' + tools.map(([n, b, sub]) =>
  `<button aria-label="${n}"><svg width="18" height="18" viewBox="0 0 18 18">${b}${sub ? f('M18 14v4h-4z') : ''}</svg></button>`).join('');
```
